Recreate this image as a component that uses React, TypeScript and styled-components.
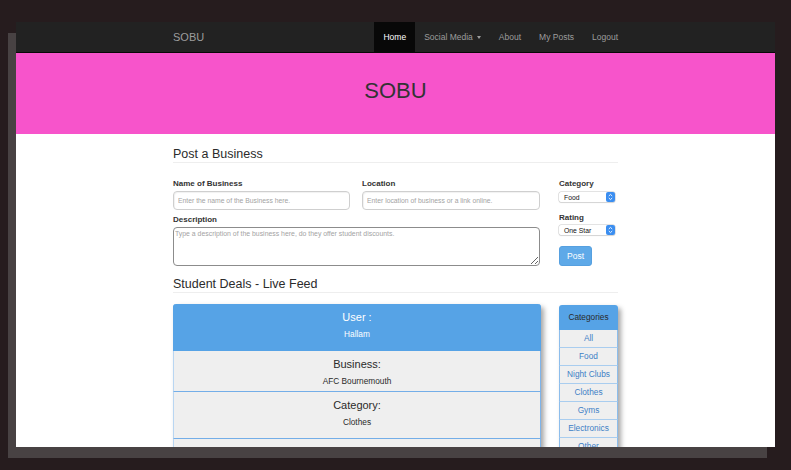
import styled, { createGlobalStyle } from 'styled-components';

const GlobalStyle = createGlobalStyle`
  html, body {
    margin: 0;
    background: #261c1e;
  }
  body {
    font-family: "Liberation Sans", Helvetica, Arial, sans-serif;
    color: #333;
  }
  * {
    box-sizing: border-box;
  }
`;

const Desktop = styled.div`
  width: 791px;
  height: 470px;
  padding: 22px 0 0 16px;
  overflow: hidden;
`;

const Browser = styled.div`
  width: 759px;
  height: 425px;
  background: #fff;
  overflow: hidden;
  box-shadow: -8px 11px 0 #484243;
`;

const Navbar = styled.nav`
  height: 31px;
  background: #222;
  border-bottom: 1px solid #080808;
`;

const NavInner = styled.div`
  width: 445px;
  height: 100%;
  margin: 0 auto;
  display: flex;
  align-items: center;
  justify-content: space-between;
`;

const Brand = styled.a`
  font-size: 11px;
  color: #9d9d9d;
  text-decoration: none;
`;

const NavList = styled.ul`
  display: flex;
  height: 100%;
  margin: 0 -9px 0 0;
  padding: 0;
  list-style: none;
`;

const NavItem = styled.li<{ $active?: boolean }>`
  display: flex;
  align-items: center;
  height: 100%;
  padding: 0 9px;
  font-size: 8.5px;
  color: ${(p) => (p.$active ? '#fff' : '#9d9d9d')};
  background: ${(p) => (p.$active ? '#080808' : 'transparent')};
`;

const Caret = styled.span`
  display: inline-block;
  margin-left: 4px;
  border-top: 3px solid #9d9d9d;
  border-left: 2.5px solid transparent;
  border-right: 2.5px solid transparent;
`;

const Jumbotron = styled.header`
  height: 81px;
  padding-top: 25px;
  background: #f754cb;
  text-align: center;
`;

const Title = styled.h1`
  margin: 0;
  font-size: 22px;
  line-height: 26px;
  font-weight: normal;
  color: #333;
`;

const Container = styled.main`
  width: 445px;
  margin: 0 auto;
`;

const SectionTitle = styled.h2<{ $top: number }>`
  margin: ${(p) => p.$top}px 0 0;
  font-size: 12.5px;
  line-height: 15px;
  font-weight: normal;
  color: #2b2b2b;
  border-bottom: 1px solid #eee;
`;

const FormGrid = styled.form`
  display: grid;
  grid-template-columns: 367px 59px;
  column-gap: 19px;
  margin-top: 15px;
`;

const LeftFields = styled.div`
  display: grid;
  grid-template-columns: 177px 178px;
  column-gap: 12px;
`;

const Field = styled.div<{ $span?: boolean; $top?: number }>`
  display: flex;
  flex-direction: column;
  grid-column: ${(p) => (p.$span ? '1 / span 2' : 'auto')};
  margin-top: ${(p) => p.$top ?? 0}px;
`;

const Label = styled.label<{ $top?: number }>`
  display: block;
  margin-top: ${(p) => p.$top ?? 0}px;
  margin-bottom: 2px;
  font-size: 8px;
  line-height: 11px;
  font-weight: bold;
  color: #333;
`;

const TextInput = styled.input`
  height: 19px;
  padding: 0 4px;
  border: 1px solid #cfcfcf;
  border-radius: 4px;
  font-family: inherit;
  font-size: 6.8px;
  box-shadow: inset 1px 1px 1px rgba(0, 0, 0, 0.06);
  &::placeholder {
    color: #a3a3a3;
  }
`;

const TextArea = styled.textarea`
  height: 39px;
  padding: 2px 1px;
  border: 1px solid #8c8c8c;
  border-radius: 4px;
  font-family: inherit;
  font-size: 6.9px;
  resize: both;
  &::placeholder {
    color: #a3a3a3;
  }
`;

const SideFields = styled.div`
  display: flex;
  flex-direction: column;
  align-items: flex-start;
`;

const SelectBox = styled.div<{ $top: number }>`
  display: flex;
  align-items: center;
  justify-content: space-between;
  width: 56px;
  height: 10px;
  margin-top: ${(p) => p.$top}px;
  padding-left: 5px;
  background: #fff;
  border-radius: 2px;
  box-shadow: 0 0 0 0.5px #c8c8c8, 0 1px 1px rgba(0, 0, 0, 0.12);
  font-size: 6.8px;
  color: #111;
`;

const SelectArrows = styled.svg`
  display: block;
`;

const PostButton = styled.button`
  width: 33px;
  height: 20px;
  margin-top: 11px;
  padding: 0;
  border: 1px solid #56a0e0;
  border-radius: 3px;
  background: #5ea9e8;
  color: #fff;
  font-family: inherit;
  font-size: 8.5px;
`;

const FeedRow = styled.section`
  display: flex;
  align-items: flex-start;
  gap: 18px;
  margin-top: 11px;
`;

const Card = styled.article`
  width: 368px;
  border-radius: 3px 3px 0 0;
  box-shadow: 3px 3px 5px rgba(0, 0, 0, 0.35);
`;

const CardRow = styled.div<{ $head?: boolean; $bottom: number }>`
  padding: 7px 0 ${(p) => p.$bottom}px;
  text-align: center;
  background: ${(p) => (p.$head ? '#56a3e6' : '#efefef')};
  border-radius: ${(p) => (p.$head ? '3px 3px 0 0' : '0')};
  border-left: 1px solid ${(p) => (p.$head ? '#56a3e6' : '#b9d6f2')};
  border-right: 1px solid ${(p) => (p.$head ? '#56a3e6' : '#7fb4e9')};
  border-bottom: ${(p) => (p.$head ? 'none' : '1px solid #74aee8')};
  color: ${(p) => (p.$head ? '#fff' : '#2a2a2a')};
`;

const RowTitle = styled.h4`
  margin: 0 0 5px;
  font-size: 11px;
  line-height: 13px;
  font-weight: normal;
`;

const RowValue = styled.p`
  margin: 0;
  font-size: 8.3px;
  line-height: 11px;
`;

const CategoryPanel = styled.aside`
  width: 59px;
  margin-top: 1px;
  border-radius: 3px 3px 0 0;
  box-shadow: 3px 3px 5px rgba(0, 0, 0, 0.35);
`;

const PanelHead = styled.div`
  height: 25px;
  padding-top: 7px;
  text-align: center;
  font-size: 8.3px;
  line-height: 11px;
  color: #2a2a2a;
  background: #56a3e6;
  border-radius: 3px 3px 0 0;
`;

const PanelItem = styled.a`
  display: block;
  height: 18px;
  line-height: 17px;
  text-align: center;
  font-size: 8.3px;
  color: #3d80c6;
  text-decoration: none;
  background: #efefef;
  border-left: 1px solid #8cbdec;
  border-right: 1px solid #8cbdec;
  border-bottom: 1px solid #a9cdef;
`;

function Select({ value, top }: { value: string; top: number }) {
  return (
    <SelectBox $top={top}>
      <span>{value}</span>
      <SelectArrows width="9" height="10" viewBox="0 0 9 10">
        <rect x="0" y="0" width="9" height="10" rx="2" fill="#3b8ef0" />
        <path d="M2.8 4 L4.5 2.4 L6.2 4 M2.8 6 L4.5 7.6 L6.2 6" stroke="#fff" strokeWidth="0.9" fill="none" />
      </SelectArrows>
    </SelectBox>
  );
}

const categories = ['All', 'Food', 'Night Clubs', 'Clothes', 'Gyms', 'Electronics', 'Other'];

export default function App() {
  return (
    <>
      <GlobalStyle />
      <Desktop>
        <Browser>
          <Navbar>
            <NavInner>
              <Brand href="#">SOBU</Brand>
              <NavList>
                <NavItem $active>Home</NavItem>
                <NavItem>
                  Social Media <Caret />
                </NavItem>
                <NavItem>About</NavItem>
                <NavItem>My Posts</NavItem>
                <NavItem>Logout</NavItem>
              </NavList>
            </NavInner>
          </Navbar>
          <Jumbotron>
            <Title>SOBU</Title>
          </Jumbotron>
          <Container>
            <SectionTitle $top={13}>Post a Business</SectionTitle>
            <FormGrid>
              <LeftFields>
                <Field>
                  <Label>Name of Business</Label>
                  <TextInput placeholder="Enter the name of the Business here." />
                </Field>
                <Field>
                  <Label>Location</Label>
                  <TextInput placeholder="Enter location of business or a link online." />
                </Field>
                <Field $span $top={4}>
                  <Label>Description</Label>
                  <TextArea placeholder="Type a description of the business here, do they offer student discounts." />
                </Field>
              </LeftFields>
              <SideFields>
                <Label>Category</Label>
                <Select value="Food" top={1} />
                <Label $top={10}>Rating</Label>
                <Select value="One Star" top={0} />
                <PostButton type="button">Post</PostButton>
              </SideFields>
            </FormGrid>
            <SectionTitle $top={11}>Student Deals - Live Feed</SectionTitle>
            <FeedRow>
              <Card>
                <CardRow $head $bottom={11}>
                  <RowTitle>User :</RowTitle>
                  <RowValue>Hallam</RowValue>
                </CardRow>
                <CardRow $bottom={4}>
                  <RowTitle>Business:</RowTitle>
                  <RowValue>AFC Bournemouth</RowValue>
                </CardRow>
                <CardRow $bottom={10}>
                  <RowTitle>Category:</RowTitle>
                  <RowValue>Clothes</RowValue>
                </CardRow>
                <CardRow $bottom={30} />
              </Card>
              <CategoryPanel>
                <PanelHead>Categories</PanelHead>
                {categories.map((c) => (
                  <PanelItem key={c} href="#">
                    {c}
                  </PanelItem>
                ))}
              </CategoryPanel>
            </FeedRow>
          </Container>
        </Browser>
      </Desktop>
    </>
  );
}
